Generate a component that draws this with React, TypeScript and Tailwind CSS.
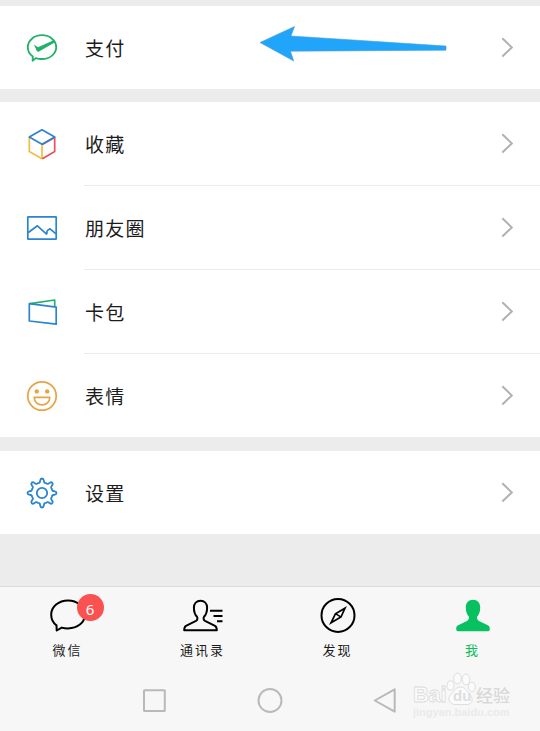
import React from 'react';

const polar = (r: number, deg: number) => {
    const a = (deg * Math.PI) / 180;
    return `${(16 + r * Math.sin(a)).toFixed(2)} ${(16 - r * Math.cos(a)).toFixed(2)}`;
};

// Eight rounded teeth joined by shallow valleys
const gearPath =
    [0, 45, 90, 135, 180, 225, 270, 315]
        .map((a, i) =>
            `${i === 0 ? 'M' : 'L'}${polar(10.8, a - 12)} L${polar(13, a - 7.5)} Q${polar(14.5, a - 6)} ${polar(14.5, a)} Q${polar(14.5, a + 6)} ${polar(13, a + 7.5)} L${polar(10.8, a + 12)} Q${polar(10.2, a + 16)} ${polar(10.7, a + 22.5)} Q${polar(10.2, a + 29)} ${polar(10.8, a + 33)}`
        )
        .join(' ') + 'Z';

const PayIcon = () => (
    <svg width="32" height="32" viewBox="0 0 32 32" fill="none">
        <path d="M6.8 24.4C3.6 22.2 1.8 18.9 1.8 15.2C1.8 8.6 8.1 3.2 16 3.2S30.2 8.6 30.2 15.2S23.9 27 16 27C13.6 27 11.6 26.7 9.8 26.1L6.6 28.7Z" stroke="#23b168" strokeWidth="1.8" strokeLinejoin="round" />
        <path d="M8 12.6L12 15.2L27.6 8.2L29.5 10L13 19.4Q11.4 20.2 10.5 18.6Z" fill="#23b168" />
    </svg>
);

const CubeIcon = () => (
    <svg width="32" height="32" viewBox="0 0 32 32" fill="none" strokeWidth="1.7" strokeLinejoin="round" strokeLinecap="round">
        <path d="M3.3 9.5V23.5L16 30.7V17" stroke="#f2bd42" />
        <path d="M28.7 9.5V23.5L16.8 30.4M16.8 16.2L28.7 9.5" stroke="#e8505b" />
        <path d="M3.3 9L16 1.8L28.7 9L16 16.2Z" stroke="#2b84d0" />
    </svg>
);

const PhotoIcon = () => (
    <svg width="32" height="32" viewBox="0 0 32 32" fill="none" stroke="#2b84d0" strokeWidth="1.7" strokeLinejoin="round">
        <rect x="1.8" y="4.8" width="28.4" height="22.4" rx="0.5" />
        <path d="M2 20.8L11.4 13.8L20 21.7Q20.7 22.2 21 21.3Q20.4 19.4 21.6 18.4L24 16.8L30 21.8" />
    </svg>
);

const CardsIcon = () => (
    <svg width="32" height="32" viewBox="0 0 32 32" fill="none" strokeWidth="1.7" strokeLinejoin="round">
        <path d="M4 7.6L28.7 4V11" stroke="#23b168" />
        <path d="M3.3 7.7L30.2 11.1V28.2L3.3 25Z" stroke="#2b84d0" />
    </svg>
);

const SmileIcon = () => (
    <svg width="32" height="32" viewBox="0 0 32 32" fill="none" stroke="#e8a343" strokeWidth="1.7">
        <circle cx="16" cy="16" r="14.2" />
        <circle cx="10.8" cy="11.4" r="2.2" fill="#e8a343" stroke="none" />
        <circle cx="21.2" cy="11.4" r="2.2" fill="#e8a343" stroke="none" />
        <path d="M8.2 17.3H23.8C23.6 22 20.5 24.8 16 24.8S8.4 22 8.2 17.3Z" strokeLinejoin="round" />
    </svg>
);

const GearIcon = () => (
    <svg width="32" height="32" viewBox="0 0 32 32" fill="none" stroke="#2b84d0" strokeWidth="1.8" strokeLinejoin="round">
        <path d={gearPath} />
        <circle cx="16" cy="16" r="5.2" />
    </svg>
);

const Chevron = () => (
    <svg className="mr-[25px]" width="16" height="22" viewBox="0 0 16 22" fill="none">
        <path d="M3.3 1.3L12.8 10.4L3.3 19.5" stroke="#b1b1b1" strokeWidth="2" />
    </svg>
);

const Row = ({ icon, label, line, children }: { icon: React.ReactNode; label: string; line?: boolean; children?: React.ReactNode }) => (
    <div className={`flex items-center pl-[26px] ${line ? 'h-[84px]' : 'h-[83px]'}`}>
        <div className="w-[58px] shrink-0">{icon}</div>
        <div className={`relative flex-1 h-full flex items-center justify-between ${line ? 'border-b border-[#ebebeb]' : ''}`}>
            <span className="pl-px pt-[5px] text-[19px] leading-6 tracking-[1.3px] text-[#1c1c1c]">{label}</span>
            {children}
            <Chevron />
        </div>
    </div>
);

const Tab = ({ label, active, children }: { label: string; active?: boolean; children: React.ReactNode }) => (
    <div className="flex-1 flex flex-col items-center pt-[9px]">
        <div className="relative h-10">{children}</div>
        <span className={`mt-[5px] text-[13px] leading-5 tracking-[2px] ${active ? 'text-[#07c160]' : 'text-[#1c1c1c]'}`}>{label}</span>
    </div>
);

const Watermark = () => (
    <div className="absolute left-[413px] top-[85px] w-[104px] text-[#dedede]">
        <div className="flex h-[34px] items-end font-bold">
            <span className="w-[33px] text-[22px] leading-[23px] text-[#fbfbfb] [-webkit-text-stroke:0.8px_#dcdcdc] tracking-[-0.3px]">Bai</span>
            <div className="relative">
                <svg width="30" height="34" viewBox="0 0 30 34" fill="#fbfbfb" stroke="#dedede">
                    <ellipse cx="4.5" cy="13.5" rx="3.4" ry="4.7" />
                    <ellipse cx="11.5" cy="6.5" rx="3.8" ry="5.4" />
                    <ellipse cx="20" cy="7.5" rx="3.8" ry="5.4" />
                    <ellipse cx="25.8" cy="15" rx="3.4" ry="4.7" />
                    <path d="M14.5 15C9 15 8 20 4.5 23S3.5 32.5 9 32.5H21C27 32.5 27.5 26 24 23S20 15 14.5 15Z" />
                </svg>
                <span className="absolute left-[7px] top-[16px] text-[15px] leading-4">du</span>
            </div>
            <span className="text-[17px] leading-[19px] font-medium text-[#d9d9d9]">经验</span>
        </div>
        <div className="text-[11px] leading-[13px] text-[#eaeaea] font-bold">jingyan.baidu.com</div>
    </div>
);

export default function App() {
    return (
        <div className="w-[540px] h-[731px] overflow-hidden flex flex-col bg-[#ececec] pt-1.5 font-['Liberation_Sans','Noto_Sans_CJK_SC',sans-serif]">
            <div className="bg-white">
                <Row icon={<PayIcon />} label="支付">
                    <svg className="absolute left-[175px] top-[19px]" width="190" height="38" viewBox="0 0 190 38">
                        <path d="M1 17.5L35.5 1.5L32 11L187 21V25.2L31.5 26.2L34.7 36Z" fill="#20a5fb" stroke="#4b9dd0" strokeWidth="0.6" />
                    </svg>
                </Row>
            </div>

            <div className="mt-[13px] bg-white">
                <Row icon={<CubeIcon />} label="收藏" line />
                <Row icon={<PhotoIcon />} label="朋友圈" line />
                <Row icon={<CardsIcon />} label="卡包" line />
                <Row icon={<SmileIcon />} label="表情" />
            </div>

            <div className="mt-[14px] bg-white">
                <Row icon={<GearIcon />} label="设置" />
            </div>

            {/* Tab bar and system keys */}
            <div className="relative mt-[52px] flex-1 border-t border-[#dcdcdc] bg-[#f7f7f7]">
                <div className="flex">
                    <Tab label="微信">
                        <svg width="36" height="40" viewBox="0 0 36 40" fill="none">
                            <path d="M6.5 29.4C3 26.7 1.2 23 1.2 18.7C1.2 10.6 8.7 4.5 18 4.5S34.8 10.6 34.8 18.7S27.3 32.4 18 32.4C15.8 32.4 13.6 32.2 11.8 31.6L6.7 34.5Z" stroke="#000" strokeWidth="2" strokeLinejoin="round" />
                        </svg>
                        <span className="absolute left-[27px] top-[-2px] size-[27px] rounded-full bg-[#fa5151] text-white text-[15px] leading-[30px] text-center font-['Noto_Sans']">6</span>
                    </Tab>
                    <Tab label="通讯录">
                        <svg width="40" height="40" viewBox="0 0 40 40" fill="none" stroke="#000" strokeWidth="2" strokeLinejoin="round">
                            <path d="M17.5 4.8C13.6 4.8 10.9 7.5 10.9 11.8C10.9 15.8 11.9 18.7 14 20.8C14.8 22 14.5 24 13 24.8L3 29.8C1.3 30.7 1.2 31.7 1.2 34.2H33.8C33.8 31.7 33.7 30.7 32 29.8L22 24.8C20.5 24 20.2 22 21 20.8C23.1 18.7 24.1 15.8 24.1 11.8C24.1 7.5 21.4 4.8 17.5 4.8Z" />
                            <path d="M27 14.7H39.5M30.5 20H39.5M34 25.3H39.5" />
                        </svg>
                    </Tab>
                    <Tab label="发现">
                        <svg width="36" height="40" viewBox="0 0 36 40" fill="none" stroke="#000" strokeWidth="2" strokeLinejoin="miter">
                            <circle cx="18" cy="19.4" r="16.5" />
                            <path d="M25 12.2L21 21L11 26.8L15.4 17.8Z" strokeWidth="1.7" />
                            <path d="M15.8 17.8L20.8 20.8" strokeWidth="1.5" />
                        </svg>
                    </Tab>
                    <Tab label="我" active>
                        <svg width="34" height="40" viewBox="0 0 34 40" fill="#07c160">
                            <path d="M17 3.8C12.6 3.8 9.8 6.8 9.8 11.5C9.8 15.8 11 18.5 12.8 20.6C13.3 22.5 12.8 24 11 25L2.2 29.3C.5 30.2.2 31 .2 33.3Q.2 35.2 2 35.2H32Q33.8 35.2 33.8 33.3C33.8 31 33.5 30.2 31.8 29.3L23 25C21.2 24 20.7 22.5 21.2 20.6C23 18.5 24.2 15.8 24.2 11.5C24.2 6.8 21.4 3.8 17 3.8Z" />
                        </svg>
                    </Tab>
                </div>

                <div className="mt-[26px] flex items-center pl-[142px] gap-[90px]">
                    <svg width="25" height="28" viewBox="0 0 25 28" fill="none" stroke="#b9b9b9" strokeWidth="2">
                        <rect x="2" y="3.3" width="20.8" height="20.8" rx="0.5" />
                    </svg>
                    <svg width="26" height="28" viewBox="0 0 26 28" fill="none" stroke="#b9b9b9" strokeWidth="2">
                        <circle cx="13" cy="13.5" r="11.5" />
                    </svg>
                    <svg width="24" height="28" viewBox="0 0 24 28" fill="none" stroke="#b9b9b9" strokeWidth="2" strokeLinejoin="round">
                        <path d="M1.8 13.5L21.7 2.3V24.7Z" />
                    </svg>
                </div>
                <Watermark />
            </div>
        </div>
    );
}
